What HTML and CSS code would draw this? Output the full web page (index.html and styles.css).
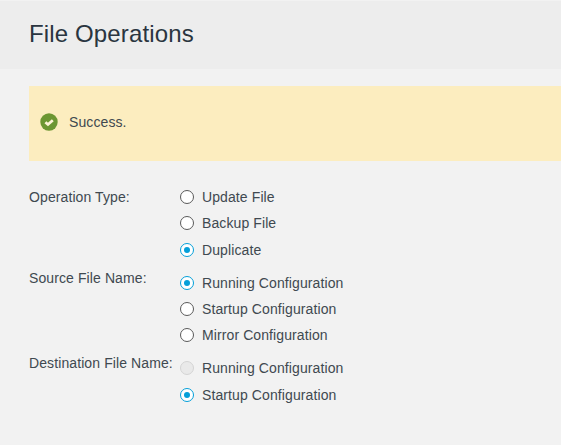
FILE: index.html
```html
<!DOCTYPE HTML>
<html>
<head>
    <title>File Operations</title>
    <meta charset="utf-8" />
    <link rel="stylesheet" href="styles.css">
</head>
<body>

<header class="page-header">
    <h1>File Operations</h1>
</header>

<div class="alert">
    <svg class="alert-icon" viewBox="0 0 18 18" width="18" height="18">
        <circle cx="9" cy="9" r="8.7" fill="#6c9632"/>
        <path d="M5.4 9.2l2.6 2.3 4.8-4.2" fill="none" stroke="#fdf3d6" stroke-width="2.8"/>
    </svg>
    <span class="alert-text">Success.</span>
</div>

<form class="form">
    <div class="field">
        <span class="field-label">Operation Type:</span>
        <div class="options">
            <label class="option"><span class="radio"></span>Update File</label>
            <label class="option"><span class="radio"></span>Backup File</label>
            <label class="option"><span class="radio checked"></span>Duplicate</label>
        </div>
    </div>
    <div class="field field-low field-tight">
        <span class="field-label">Source File Name:</span>
        <div class="options">
            <label class="option"><span class="radio checked"></span>Running Configuration</label>
            <label class="option"><span class="radio"></span>Startup Configuration</label>
            <label class="option"><span class="radio"></span>Mirror Configuration</label>
        </div>
    </div>
    <div class="field field-low">
        <span class="field-label">Destination File Name:</span>
        <div class="options">
            <label class="option"><span class="radio disabled"></span>Running Configuration</label>
            <label class="option"><span class="radio checked"></span>Startup Configuration</label>
        </div>
    </div>
</form>

</body>
</html>
```

FILE: styles.css
```css
/* Base */
body {
    margin: 0;
    background: #f2f2f2;
    font-family: "Liberation Sans", Arial, sans-serif;
    font-size: 14px;
    letter-spacing: 0.1px;
    color: #404950;
    overflow: hidden;
}

/* Header */
.page-header {
    height: 68px;
    margin-top: 1px;
    padding-left: 29px;
    background: #ededed;
    display: flex;
    align-items: center;
}

.page-header h1 {
    margin: 0 0 3px;
    font-size: 24px;
    font-weight: normal;
    letter-spacing: 0.14px;
    color: #2a3540;
}

/* Alert */
.alert {
    box-sizing: border-box;
    height: 75px;
    margin: 17px 0 0 29px;
    padding: 0 0 4px 11px;
    background: #fcedbf;
    display: flex;
    align-items: center;
    gap: 11px;
}

/* Form */
.form {
    margin-top: 22.5px;
    padding-left: 29px;
}

.field {
    display: flex;
}

.field-label {
    width: 151px;
    line-height: 26px;
}

.field-low .field-label {
    padding-top: 2px;
}

.field-low .options {
    padding-top: 7px;
}

.options {
    display: flex;
    flex-direction: column;
}

.option {
    height: 26.5px;
    display: flex;
    align-items: center;
    gap: 8px;
}

.field-tight .option {
    height: 26px;
}

/* Radios */
.radio {
    box-sizing: border-box;
    width: 14px;
    height: 14px;
    border: 1.2px solid #5a5a5a;
    border-radius: 50%;
    background: #fff;
    display: grid;
    place-items: center;
}

.radio.checked {
    border: 1.6px solid #049fd9;
}

.radio.checked::after {
    content: "";
    width: 6px;
    height: 6px;
    border-radius: 50%;
    background: #049fd9;
}

.radio.disabled {
    border-color: #d4d4d4;
    background: #e9e9e9;
}
```
